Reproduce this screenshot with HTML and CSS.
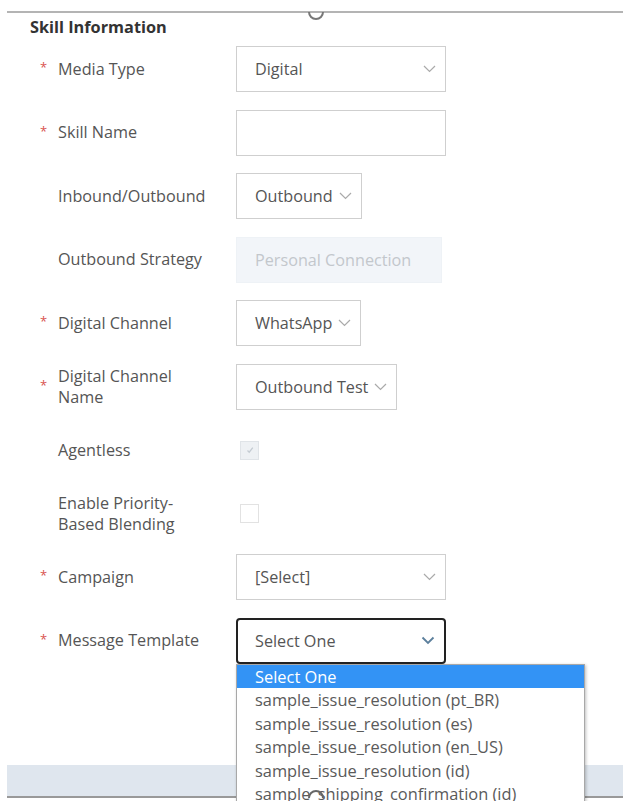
FILE: index.html
```html
<!DOCTYPE html>
<html lang="en">
<head>
  <meta charset="UTF-8">
  <title>Skill Information</title>
  <link rel="stylesheet" href="styles.css">
</head>
<body>

<div class="splitter">
  <svg class="grip grip-top" width="18" height="12" viewBox="0 0 18 12"><path d="M2 2 A7 7 0 0 0 16 2" fill="none" stroke="#777" stroke-width="2"/></svg>
</div>

<h2 class="section-title">Skill Information</h2>

<div class="form">
  <div class="row">
    <span class="req">*</span><label>Media Type</label>
    <div class="select wide"><span>Digital</span><svg class="chev" width="13" height="8" viewBox="0 0 13 8"><path d="M1 1 L6.5 6.5 L12 1" fill="none" stroke="#aaa" stroke-width="1.2"/></svg></div>
  </div>
  <div class="row">
    <span class="req">*</span><label>Skill Name</label>
    <input class="text-input wide" type="text">
  </div>
  <div class="row">
    <span class="req"></span><label>Inbound/Outbound</label>
    <div class="select"><span>Outbound</span><svg class="chev" width="13" height="8" viewBox="0 0 13 8"><path d="M1 1 L6.5 6.5 L12 1" fill="none" stroke="#aaa" stroke-width="1.2"/></svg></div>
  </div>
  <div class="row">
    <span class="req"></span><label>Outbound Strategy</label>
    <div class="select disabled"><span>Personal Connection</span></div>
  </div>
  <div class="row">
    <span class="req">*</span><label>Digital Channel</label>
    <div class="select"><span>WhatsApp</span><svg class="chev" width="13" height="8" viewBox="0 0 13 8"><path d="M1 1 L6.5 6.5 L12 1" fill="none" stroke="#aaa" stroke-width="1.2"/></svg></div>
  </div>
  <div class="row">
    <span class="req">*</span><label>Digital Channel<br>Name</label>
    <div class="select"><span>Outbound Test</span><svg class="chev" width="13" height="8" viewBox="0 0 13 8"><path d="M1 1 L6.5 6.5 L12 1" fill="none" stroke="#aaa" stroke-width="1.2"/></svg></div>
  </div>
  <div class="row">
    <span class="req"></span><label>Agentless</label>
    <span class="check checked">
      <svg width="10" height="10" viewBox="0 0 10 10"><path d="M2.5 5.5 L4.2 7.2 L7.8 2.6" fill="none" stroke="#c4cbd2" stroke-width="1.3"/></svg>
    </span>
  </div>
  <div class="row">
    <span class="req"></span><label>Enable Priority-<br>Based Blending</label>
    <span class="check"></span>
  </div>
  <div class="row">
    <span class="req">*</span><label>Campaign</label>
    <div class="select wide"><span>[Select]</span><svg class="chev" width="13" height="8" viewBox="0 0 13 8"><path d="M1 1 L6.5 6.5 L12 1" fill="none" stroke="#aaa" stroke-width="1.2"/></svg></div>
  </div>
  <div class="row">
    <span class="req">*</span><label>Message Template</label>
    <div class="dropdown">
      <div class="select wide open"><span>Select One</span><svg class="chev" width="14" height="9" viewBox="0 0 14 9"><path d="M1.5 1.5 L7 7 L12.5 1.5" fill="none" stroke="#5b7f9c" stroke-width="1.8"/></svg></div>
      <ul class="options">
        <li class="active">Select One</li>
        <li>sample_issue_resolution (pt_BR)</li>
        <li>sample_issue_resolution (es)</li>
        <li>sample_issue_resolution (en_US)</li>
        <li>sample_issue_resolution (id)</li>
        <li>sample_shipping_confirmation (id)</li>
      </ul>
    </div>
  </div>
</div>

<div class="footer-band"></div>
<div class="splitter bottom">
  <svg class="grip grip-bottom" width="18" height="10" viewBox="0 0 18 10"><path d="M2 10 A7 7 0 0 1 16 10" fill="none" stroke="#666" stroke-width="2"/></svg>
</div>

</body>
</html>
```

FILE: styles.css
```css
body {
  margin: 0;
  padding: 0;
  background: white;
  font-family: "Open Sans", "Noto Sans", Arial, sans-serif;
  color: #555;
  overflow: hidden;
  height: 801px;
}

.splitter {
  position: relative;
  margin: 11px 4px 0 7px;
  height: 2px;
  background: #b4b4b4;
}
.grip {
  position: absolute;
  left: 300px;
}
.grip-top { top: -1px; }
.grip-bottom { top: -8px; z-index: 20; }

.section-title {
  margin: 4px 0 0 30px;
  font-size: 16.3px;
  font-weight: 700;
  line-height: 20px;
  color: #333;
}

.form {
  display: flex;
  flex-direction: column;
  gap: 17.5px;
  margin-top: 9px;
  padding-left: 40px;
}
.row {
  display: flex;
  align-items: center;
  height: 46px;
}
.req {
  width: 18px;
  color: #d9534f;
  font-size: 13px;
  align-self: center;
  margin-top: -4px;
}
.row label {
  width: 178px;
  font-size: 16.2px;
  line-height: 21px;
  color: #555;
}

.select {
  box-sizing: border-box;
  display: inline-flex;
  align-items: center;
  gap: 6px;
  height: 46px;
  padding: 0 9px 0 18px;
  border: 1.5px solid #cfcfcf;
  font-size: 16.2px;
  color: #555;
  background: white;
}
.select.wide {
  width: 210px;
  justify-content: space-between;
}
.select.disabled {
  width: 206px;
  border-color: #eef2f6;
  background: #f2f5f9;
  color: #c3c7cc;
}
.select.open {
  border: 2px solid #222;
  border-radius: 4px;
  padding-left: 17px;
}
.chev { flex: none; }

.text-input {
  box-sizing: border-box;
  height: 46px;
  border: 1.5px solid #cfcfcf;
  font: inherit;
  outline: none;
}
.text-input.wide { width: 210px; }

.check {
  box-sizing: border-box;
  display: inline-flex;
  align-items: center;
  justify-content: center;
  width: 19px;
  height: 19px;
  margin-left: 4px;
  border: 1.5px solid #e2e2e2;
  background: white;
}
.check.checked {
  background: #eef1f4;
  border-color: #e0e4e8;
}

.dropdown {
  position: relative;
}
.options {
  position: absolute;
  top: 46px;
  left: 0;
  z-index: 10;
  width: 347px;
  margin: 0;
  padding: 0;
  list-style: none;
  background: white;
  border: 1px solid #a8a8a8;
  box-shadow: 1px 1px 3px rgba(0,0,0,0.25);
  font-size: 16.4px;
  color: #5a5a5a;
}
.options li {
  height: 23.5px;
  line-height: 23.5px;
  padding-left: 18px;
  white-space: nowrap;
}
.options li.active {
  background: #3393f5;
  color: white;
}

.footer-band {
  margin: 101px 4px 0 7px;
  height: 31px;
  background: #dfe6ee;
}
.splitter.bottom {
  margin-top: 0;
  background: #999;
}
```
